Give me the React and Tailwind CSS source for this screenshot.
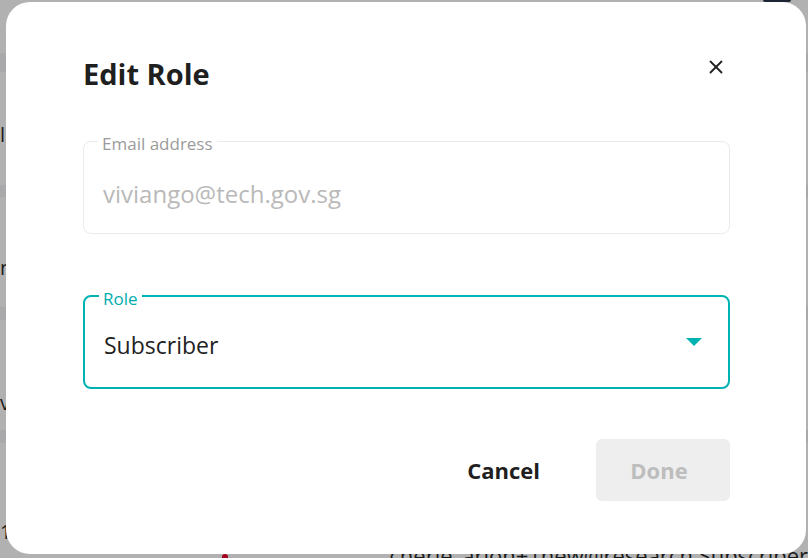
import React from 'react';
import { X } from 'lucide-react';

const font = { fontFamily: '"Open Sans", "Noto Sans", sans-serif' };

// bits of the page that peek out at the left edge behind the dialog
const EdgeText = ({ children }) => (
  <div className="whitespace-nowrap text-[20px] leading-6 text-[#1a1a1a]">{children}</div>
);

const Backdrop = () => (
  <div className="absolute inset-0 bg-[#b1b1b1] flex flex-col">
    <div className="shrink-0 h-[2px] flex justify-end pr-[17px]">
      <div className="w-[28px] h-[2px] rounded-b-full bg-[#1d2433]" />
    </div>
    <div className="shrink-0 h-[51px]" />
    <div className="shrink-0 h-[19px] bg-[#a9a9ab]" />
    <div className="shrink-0 h-[113px] pt-[51px]">
      <EdgeText>l</EdgeText>
    </div>
    <div className="shrink-0 h-[12px] bg-[#a9a9ab]" />
    <div className="shrink-0 h-[110px] pt-[59px]">
      <EdgeText>n</EdgeText>
    </div>
    <div className="shrink-0 h-[13px] bg-[#a9a9ab]" />
    <div className="shrink-0 h-[110px] pt-[71px]">
      <EdgeText>v</EdgeText>
    </div>
    <div className="shrink-0 h-[13px] bg-[#a9a9ab]" />
    <div className="shrink-0 h-[77px]" />
    <div className="shrink-0 h-[23px]">
      <EdgeText>1</EdgeText>
    </div>
    <div className="shrink-0 flex items-start pl-[222px]">
      <div className="mt-[11px] w-[32px] h-[32px] rounded-full bg-[#a3001b]" />
      <div className="ml-[161px] text-[22px] leading-6 text-[#1a1a1a] whitespace-nowrap">
        cherie_arion+1new@research Subscriber
      </div>
    </div>
  </div>
);

const OutlinedField = ({ label, focused, children }) => (
  <div
    className={
      focused
        ? 'relative h-[94px] rounded-lg border-2 border-[#00b3b3] flex items-center pl-[19px] pr-[26px] pt-[6px]'
        : 'relative h-[93px] rounded-lg border border-[#ebebeb] flex items-center pl-[19px] pr-[26px] pt-[12px]'
    }
  >
    <span
      className={
        focused
          ? 'absolute left-[14px] top-[-10px] bg-white px-[4px] text-[17px] leading-6 text-[#00adad]'
          : 'absolute left-[14px] top-[-10px] bg-white px-[4px] text-[17px] leading-6 text-[#9b9b9b]'
      }
    >
      {label}
    </span>
    {children}
  </div>
);

export default function App() {
  return (
    <div className="relative h-[558px] w-[808px] overflow-hidden" style={font}>
      <Backdrop />
      <div className="absolute inset-0 pt-[2px] pl-[6px]">
        <div className="w-[800px] h-[552px] bg-white rounded-[24px] flex flex-col pl-[77px] pr-[76px] pt-[54px]">
          <div className="flex items-start justify-between">
            <h1 className="text-[29px] leading-9 font-bold text-[#1f1f1f]">Edit Role</h1>
            <button className="mr-[3px] text-[#222]">
              <X size={22} strokeWidth={2} />
            </button>
          </div>

          <div className="mt-[49px]">
            <OutlinedField label="Email address">
              <span className="text-[24px] text-[#b9b9b9]">viviango@tech.gov.sg</span>
            </OutlinedField>
          </div>

          <div className="mt-[61px]">
            <OutlinedField label="Role" focused>
              <span className="flex-1 text-[23px] text-[#222]">Subscriber</span>
              <svg width="16" height="8" viewBox="0 0 16 8" className="mt-[-6px]">
                <polygon points="0,0 16,0 8,8" fill="#00b3b3" />
              </svg>
            </OutlinedField>
          </div>

          <div className="mt-[50px] flex justify-end items-center gap-[56px]">
            <button className="text-[22px] font-bold text-[#1f1f1f]">Cancel</button>
            <button className="w-[134px] h-[62px] pr-[8px] rounded-md bg-[#eeeeee] text-[22px] font-bold text-[#bdbdbd]">
              Done
            </button>
          </div>
        </div>
      </div>
    </div>
  );
}
